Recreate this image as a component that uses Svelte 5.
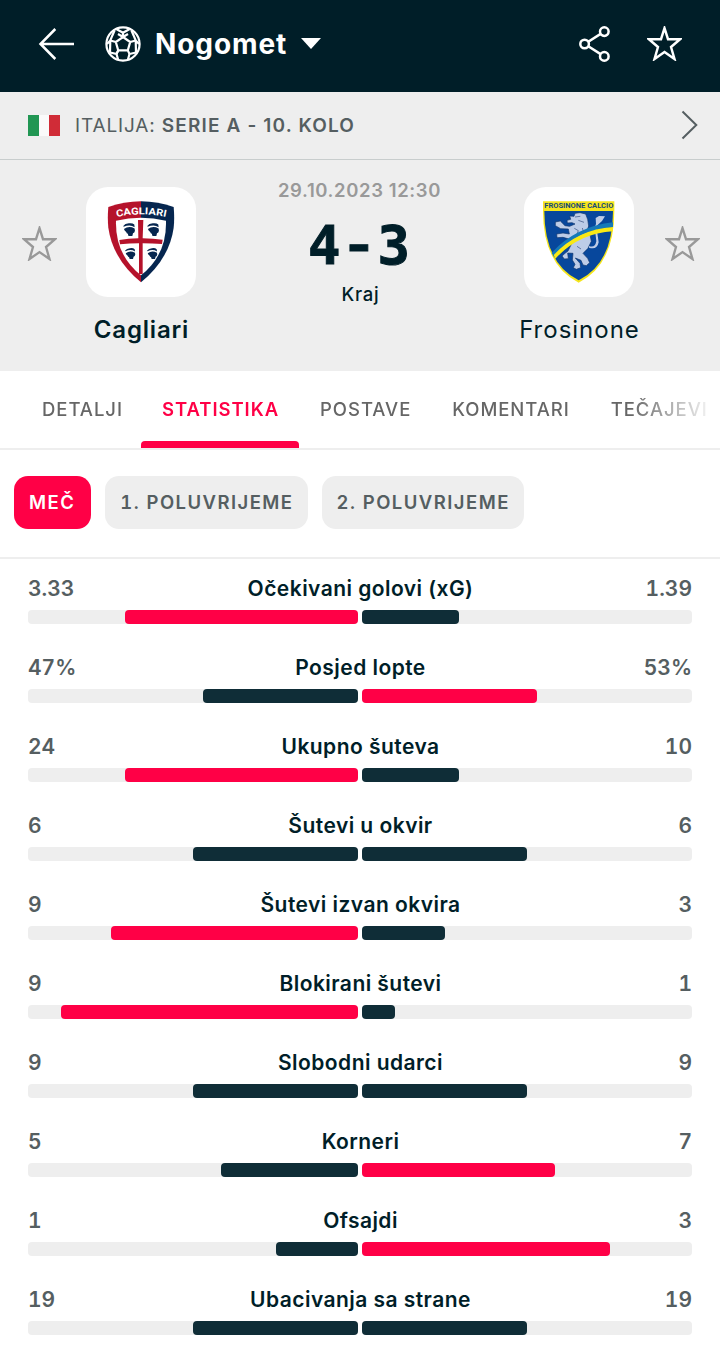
<script>
  const tabs = ['Detalji', 'Statistika', 'Postave', 'Komentari', 'Tečajevi'];
  const periods = ['Meč', '1. poluvrijeme', '2. poluvrijeme'];

  let activeTab = $state('Statistika');
  let activePeriod = $state('Meč');

  const stats = [
    { label: 'Očekivani golovi (xG)', home: 3.33, away: 1.39 },
    { label: 'Posjed lopte', home: 47, away: 53, unit: '%' },
    { label: 'Ukupno šuteva', home: 24, away: 10 },
    { label: 'Šutevi u okvir', home: 6, away: 6 },
    { label: 'Šutevi izvan okvira', home: 9, away: 3 },
    { label: 'Blokirani šutevi', home: 9, away: 1 },
    { label: 'Slobodni udarci', home: 9, away: 9 },
    { label: 'Korneri', home: 5, away: 7 },
    { label: 'Ofsajdi', home: 1, away: 3 },
    { label: 'Ubacivanja sa strane', home: 19, away: 19 }
  ];

  function share(value, stat) {
    return (value / (stat.home + stat.away)) * 100;
  }
</script>

{#snippet star()}
  <svg class="star" viewBox="0 0 36 36" aria-hidden="true">
    <path d="M18 2.2 21.6 13.6H34L24.7 21.6 28.3 34 18 26.8 7.7 34 11.3 21.6 2 13.6H14.4Z" />
  </svg>
{/snippet}

{#snippet head(x, y, s)}
  <g transform="translate({x} {y}) scale({s})">
    <path d="M3 11Q8 4 20 3 31 1 37 7L38 15Q24 5 4 14Z" fill="#06264f" />
    <path d="M5 21Q20 9 38 19L39 26Q38 33 33 34L31 42H19L17 35Q13 35 12 30 7 27 5 21Z" fill="#06264f" />
  </g>
{/snippet}

<div class="app">
  <header class="topbar">
    <button class="icon-btn back" aria-label="Natrag">
      <svg width="37" height="32" viewBox="0 0 37 32">
        <path d="M17.3 1 2.5 16 17.3 31M2.5 16H36" />
      </svg>
    </button>
    <svg class="ball" width="36" height="36" viewBox="0 0 36 36" aria-hidden="true">
      <circle cx="18" cy="18" r="16.6" />
      <path d="M18 11 25.2 16 22.8 24.4H13.2L10.8 16ZM18 11V6.7M25.2 16 30.7 14.5M22.8 24.4 24.5 28M13.2 24.4 11.5 28M10.8 16 5.3 14.5" />
      <path d="M11.7 3.2 18 6.7 24.3 3.2M18 6.7V11L23 8M18 11 13 8M28.5 9.2 30.7 14.5 34 18M28.5 9.2 26.5 4.5M7.5 9.2 9.5 4.5M7.5 9.2 5.3 14.5 2 18M5 26.5 11.5 28 13.2 34M11.5 28 13.2 24.4M24.5 28 22.8 34M24.5 28 31 26.5M30.7 14.5 31 26.5M5.3 14.5 5 26.5" />
    </svg>
    <h1>Nogomet</h1>
    <span class="caret"></span>
    <div class="actions">
      <button class="icon-btn" aria-label="Podijeli">
        <svg width="32" height="36" viewBox="0 0 32 36">
          <circle cx="5.6" cy="18" r="4.3" />
          <circle cx="25.3" cy="5.6" r="4.3" />
          <circle cx="25.3" cy="30.4" r="4.3" />
          <path d="M9.3 15.7 21.6 7.9M9.3 20.3 21.6 28.1" />
        </svg>
      </button>
      <button class="icon-btn" aria-label="Favorit">{@render star()}</button>
    </div>
  </header>

  <div class="league">
    <span class="flag"></span>
    <span class="league-name">Italija: <b>Serie A - 10. kolo</b></span>
    <svg class="chevron" width="17" height="30" viewBox="0 0 17 30">
      <path d="M1.5 1.5 15.3 15 1.5 28.5" />
    </svg>
  </div>

  <section class="match">
    <button class="icon-btn fav" aria-label="Cagliari favorit">{@render star()}</button>
    <div class="team winner">
      <div class="crest">
        <svg width="110" height="110" viewBox="18 21 330 330">
          <path d="M183 64Q132 65 85 81 82 115 85 143 98 237 183 307Z" fill="#b5122b" />
          <path d="M183 64Q234 65 281 81 284 115 281 143 268 237 183 307Z" fill="#06264f" />
          <path d="M108 122Q183 105 258 122 261 224 183 286 105 224 108 122Z" fill="#fff" />
          <path d="M174 120H190L188 175Q219 176 248 179L246 192Q216 190 188 190V282H177V190Q150 190 120 193L118 180Q145 176 175 175Z" fill="#b5122b" />
          {@render head(127, 127, 0.97)}
          {@render head(199, 127, 0.97)}
          {@render head(133, 202, 0.84)}
          {@render head(199, 202, 0.84)}
          <path id="cagliari-arc" d="M110 111Q183 95 258 111" fill="none" />
          <text class="crest-name home"><textPath href="#cagliari-arc" textLength="149" lengthAdjust="spacingAndGlyphs">CAGLIARI</textPath></text>
        </svg>
      </div>
      <span class="name">Cagliari</span>
    </div>
    <div class="result">
      <span class="date">29.10.2023 12:30</span>
      <strong class="score">4<span class="dash">-</span>3</strong>
      <span class="status">Kraj</span>
    </div>
    <div class="team">
      <div class="crest">
        <svg width="110" height="110" viewBox="27 21 330 330">
          <path d="M84 64H298V92Q298 254 191 308 84 254 84 92Z" fill="#f5e51b" />
          <path d="M88 93H294Q294 250 191 301 88 250 88 93Z" fill="#07479c" />
          <path d="M167 118 164 108 177 109 180 100 195 98 212 102 218 118 221 138 216 153 226 169 229 184 219 205 204 220 218 235 224 248 214 257 204 255 198 241 181 234 195 250 197 263 184 268 175 263 180 253 172 240 174 220 158 219 160 236 148 237 141 228 150 220 159 213 169 193 165 178 144 172 126 173 125 162 144 159 163 162 160 147 137 146 121 137 121 126 136 123 150 137 164 139 180 132 171 128 157 129 156 121Z" fill="#bdcce7" stroke="#12366d" stroke-width="2" />
          <path d="M222 198Q240 205 244 184L241 158Q236 146 243 132L242 114 252 108 270 109 261 123 247 136Q242 145 247 160L251 187Q246 211 222 203Z" fill="#bdcce7" />
          <path d="M180 111 196 109M190 121 207 127M178 145 190 152 184 167M202 144 206 157M186 199 198 207" fill="none" stroke="#314a7c" stroke-width="2" />
          <path d="M110 218Q184 139 294 127V142Q188 148 116 230Z" fill="#1579b8" />
          <path d="M116 225Q188 148 294 141V154Q193 159 121 236Z" fill="#f9e914" />
          <text class="crest-name away" x="88" y="85" textLength="207" lengthAdjust="spacingAndGlyphs">FROSINONE CALCIO</text>
        </svg>
      </div>
      <span class="name">Frosinone</span>
    </div>
    <button class="icon-btn fav" aria-label="Frosinone favorit">{@render star()}</button>
  </section>

  <nav class="tabs">
    {#each tabs as tab}
      <button class="tab" class:active={tab === activeTab} onclick={() => (activeTab = tab)}>{tab}</button>
    {/each}
  </nav>

  <div class="periods">
    {#each periods as period}
      <button class="pill" class:active={period === activePeriod} onclick={() => (activePeriod = period)}>{period}</button>
    {/each}
  </div>

  <div class="stats">
    {#each stats as stat}
      <div class="stat">
        <div class="stat-text">
          <span class="value">{stat.home}{stat.unit ?? ''}</span>
          <span class="label">{stat.label}</span>
          <span class="value right">{stat.away}{stat.unit ?? ''}</span>
        </div>
        <div class="bars">
          <div class="track home">
            <div class="fill" class:lead={stat.home > stat.away} style="width: {share(stat.home, stat)}%"></div>
          </div>
          <div class="track away">
            <div class="fill" class:lead={stat.away > stat.home} style="width: {share(stat.away, stat)}%"></div>
          </div>
        </div>
      </div>
    {/each}
  </div>
</div>

<style>
  :global(body) {
    margin: 0;
    background: #fff;
  }

  .app {
    width: 720px;
    height: 1346px;
    overflow: hidden;
    box-sizing: border-box;
    font-family: Inter, Roboto, sans-serif;
    color: #001e28;
  }

  .app * {
    box-sizing: border-box;
  }

  button {
    margin: 0;
    padding: 0;
    border: 0;
    background: none;
    font: inherit;
    color: inherit;
  }

  svg {
    display: block;
    flex: none;
  }

  .topbar {
    display: flex;
    align-items: center;
    height: 92px;
    padding: 0 38px 5px 38px;
    background: #001e28;
    color: #fff;
  }

  .topbar svg {
    fill: none;
    stroke: currentColor;
    stroke-width: 2.5;
  }

  .ball {
    margin-left: 29.5px;
  }

  .topbar .ball {
    stroke-width: 2.2;
  }

  h1 {
    margin: 0 0 0 14.5px;
    font-size: 28px;
    line-height: 34px;
    font-weight: 650;
    letter-spacing: 0.9px;
  }

  .caret {
    margin-left: 14px;
    border: 10.5px solid transparent;
    border-top: 11px solid #fff;
    border-bottom: 0;
  }

  .actions {
    display: flex;
    align-items: center;
    gap: 36px;
    margin-left: auto;
  }

  .star {
    width: 35px;
    height: 35px;
    fill: none;
    stroke: currentColor;
    stroke-width: 2.4;
  }

  .league {
    display: flex;
    align-items: center;
    height: 68px;
    padding: 0 22px 1px 28px;
    background: #eee;
    border-bottom: 1px solid #c8cdcd;
    color: #555e61;
  }

  .flag {
    width: 32px;
    height: 21px;
    background: linear-gradient(90deg, #219653 0 11px, #fafafa 11px 21px, #d02c37 21px);
  }

  .league-name {
    margin-left: 15px;
    font-size: 19px;
    letter-spacing: 0.85px;
    text-transform: uppercase;
  }

  .league-name b {
    font-weight: 600;
    letter-spacing: 1.15px;
  }

  .chevron {
    margin-left: auto;
    fill: none;
    stroke: #555e61;
    stroke-width: 2;
  }

  .match {
    display: flex;
    height: 211px;
    padding: 0 20px 0 22px;
    background: #eee;
  }

  .fav {
    align-self: flex-start;
    margin-top: 66px;
    color: #999;
  }

  .team {
    display: flex;
    flex-direction: column;
    align-items: center;
    width: 168px;
    padding-top: 27px;
  }

  .team:not(.winner) {
    width: 172px;
  }

  .crest {
    border-radius: 22px;
    background: #fff;
    overflow: hidden;
  }

  .crest-name {
    font-family: Roboto, sans-serif;
    font-weight: 700;
  }

  .crest-name.home {
    font-size: 29px;
    fill: #fff;
  }

  .crest-name.away {
    font-size: 23px;
    fill: #174b79;
  }

  .name {
    margin-top: 18px;
    padding-left: 1px;
    font-size: 24px;
    line-height: 30px;
    letter-spacing: 1px;
  }

  .winner .name {
    font-weight: 600;
    letter-spacing: 0.8px;
  }

  .result {
    display: flex;
    flex: 1;
    flex-direction: column;
    align-items: center;
    padding-top: 18px;
  }

  .date {
    padding-left: 1px;
    font-size: 18.5px;
    line-height: 24px;
    font-weight: 600;
    letter-spacing: 0.6px;
    color: #999;
  }

  .score {
    margin-top: 11px;
    font-family: 'DejaVu Sans Mono', monospace;
    font-size: 54px;
    line-height: 64px;
    -webkit-text-stroke: 1px currentColor;
  }

  .dash {
    display: inline-block;
    width: 37px;
    font-family: Inter, sans-serif;
    font-weight: 700;
    text-align: center;
  }

  .status {
    margin-top: 4px;
    padding-left: 3px;
    font-size: 18.5px;
    line-height: 24px;
    font-weight: 500;
    letter-spacing: 0.7px;
  }

  .tabs {
    display: flex;
    height: 79px;
    padding-left: 21px;
    border-bottom: 2px solid #eee;
    overflow: hidden;
    mask-image: linear-gradient(#000, #000), linear-gradient(90deg, #000 630px, transparent 716px);
    mask-size: 100% 2px, 100% 77px;
    mask-position: 0 77px, 0 0;
    mask-repeat: no-repeat;
  }

  .tab {
    flex: none;
    padding: 7px 20px 1px 21px;
    border-bottom: 7px solid transparent;
    font-size: 18.5px;
    font-weight: 550;
    letter-spacing: 0.95px;
    text-transform: uppercase;
    color: #666;
  }

  .tab:first-child {
    padding-right: 18px;
  }

  .tab.active {
    position: relative;
    font-weight: 600;
    color: #ff0046;
  }

  .tab.active::after {
    content: '';
    position: absolute;
    left: 0;
    right: 0;
    bottom: -7px;
    height: 7px;
    border-radius: 4px 4px 0 0;
    background: #ff0046;
  }

  .periods {
    display: flex;
    align-items: center;
    gap: 14px;
    height: 109px;
    padding: 0 14px 2px;
    border-bottom: 2px solid #eee;
  }

  .pill {
    height: 53px;
    padding: 0 14px 1px 15px;
    border-radius: 14px;
    background: #eee;
    font-size: 18.5px;
    font-weight: 600;
    font-variant-numeric: tabular-nums;
    letter-spacing: 1.45px;
    text-transform: uppercase;
    color: #555e61;
  }

  .pill.active {
    padding-right: 16px;
    background: #ff0046;
    color: #fff;
  }

  .stat {
    padding: 16px 28px 14px;
  }

  .stat-text {
    display: flex;
    justify-content: space-between;
    height: 35px;
    font-size: 21px;
    line-height: 28px;
    font-weight: 600;
    letter-spacing: 0.45px;
  }

  .label {
    padding-left: 1px;
  }

  .value {
    width: 100px;
    font-variant-numeric: tabular-nums;
    letter-spacing: 0;
    color: #555e61;
  }

  .value.right {
    text-align: right;
  }

  .bars {
    display: flex;
    gap: 4px;
  }

  .track {
    display: flex;
    flex: 1;
    height: 14px;
    border-radius: 4px;
    background: #eee;
  }

  .track.home {
    justify-content: flex-end;
  }

  .fill {
    border-radius: 4px;
    background: #0f2d37;
  }

  .fill.lead {
    background: #ff0046;
  }
</style>
